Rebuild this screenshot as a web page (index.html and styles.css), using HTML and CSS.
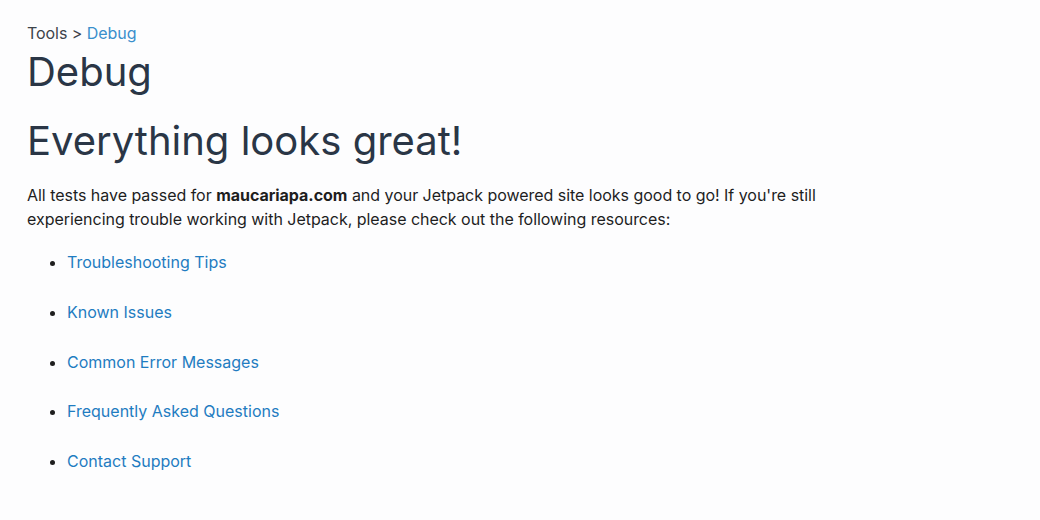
FILE: index.html
```html
<!DOCTYPE html>
<html lang="en">
<head>
<meta charset="utf-8">
<title>Debug</title>
<link rel="stylesheet" href="styles.css">
</head>
<body>
<div class="page">
  <nav class="breadcrumb">Tools &gt; <a href="#" class="crumb-link">Debug</a></nav>
  <h1 class="title">Debug</h1>
  <h2 class="headline">Everything looks great!</h2>
  <p class="intro">All tests have passed for <strong>maucariapa.com</strong> and your Jetpack powered site looks good to go! If you're still experiencing trouble working with Jetpack, please check out the following resources:</p>
  <ul class="resources">
    <li><a href="#">Troubleshooting Tips</a></li>
    <li><a href="#">Known Issues</a></li>
    <li><a href="#">Common Error Messages</a></li>
    <li><a href="#">Frequently Asked Questions</a></li>
    <li><a href="#">Contact Support</a></li>
  </ul>
</div>
</body>
</html>
```

FILE: styles.css
```css
html, body {
  margin: 0;
  padding: 0;
  background: #fdfdfe;
}
body {
  font-family: Inter, "Noto Sans", sans-serif;
  color: #1e1e1e;
}
.page {
  padding: 22px 27px;
  max-width: 800px;
}
.breadcrumb {
  font-size: 16px;
  line-height: 22px;
  color: #3c434a;
  letter-spacing: -0.05px;
}
.crumb-link {
  color: #3a8fcc;
  text-decoration: none;
}
.title {
  margin: 4px 0 0;
  font-size: 40px;
  line-height: 48px;
  font-weight: 400;
  color: #2a3646;
}
.headline {
  margin: 21px 0 0;
  font-size: 40px;
  line-height: 48px;
  font-weight: 400;
  color: #2a3646;
}
.intro {
  margin: 18px 0 0;
  font-size: 16px;
  line-height: 24px;
  color: #1e1e1e;
  letter-spacing: -0.03px;
}
.intro strong {
  font-weight: 700;
}
.resources {
  margin: 19px 0 0;
  padding-left: 40px;
  font-size: 16px;
  line-height: 24px;
}
.resources li {
  margin-bottom: 25.75px;
}
.resources a {
  color: #1f7cc1;
  text-decoration: none;
}
```
